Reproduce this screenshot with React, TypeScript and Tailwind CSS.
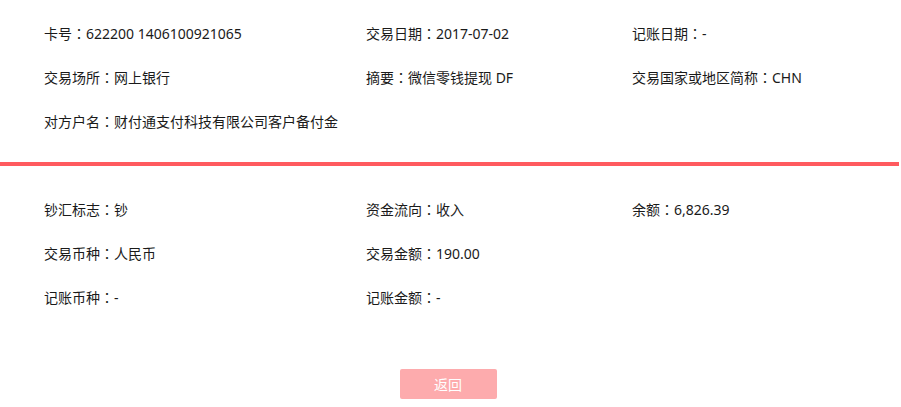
import React from "react";

const font = { fontFamily: '"Segoe UI", "Noto Sans", "Noto Sans CJK SC", sans-serif' };

const Item = ({ t }: { t: string }) => {
  if (!t) return <div />;
  const idx = t.indexOf("：");
  return (
    <div className="whitespace-nowrap">
      {t.slice(0, idx)}
      <span className="font-['Noto_Sans_CJK_TC',sans-serif]">：</span>
      {t.slice(idx + 1)}
    </div>
  );
};

const Row = ({ items }: { items: string[] }) => (
  <div className="grid h-[44px] grid-cols-[322px_266px_1fr] items-center">
    {items.map((t, i) => (
      <Item key={i} t={t} />
    ))}
  </div>
);

export default function App() {
  return (
    <div className="w-[899px] bg-white text-[14px] text-[#1a1a1a]" style={font}>
      <div className="px-[44px] pt-[11px]">
        <Row items={["卡号：622200 1406100921065", "交易日期：2017-07-02", "记账日期：-"]} />
        <Row items={["交易场所：网上银行", "摘要：微信零钱提现 DF", "交易国家或地区简称：CHN"]} />
        <Row items={["对方户名：财付通支付科技有限公司客户备付金", "", ""]} />
      </div>
      <div className="mt-[19px] h-[4px] w-full bg-[#ff5a5f]" />
      <div className="px-[44px] pt-[21px]">
        <Row items={["钞汇标志：钞", "资金流向：收入", "余额：6,826.39"]} />
        <Row items={["交易币种：人民币", "交易金额：190.00", ""]} />
        <Row items={["记账币种：-", "记账金额：-", ""]} />
      </div>
      <div className="flex justify-center pt-[50px] pb-[8px]">
        <button className="ml-[-3px] h-[30px] w-[97px] rounded-[2px] bg-[#fdabad] text-[14px] text-white">
          返回
        </button>
      </div>
    </div>
  );
}
